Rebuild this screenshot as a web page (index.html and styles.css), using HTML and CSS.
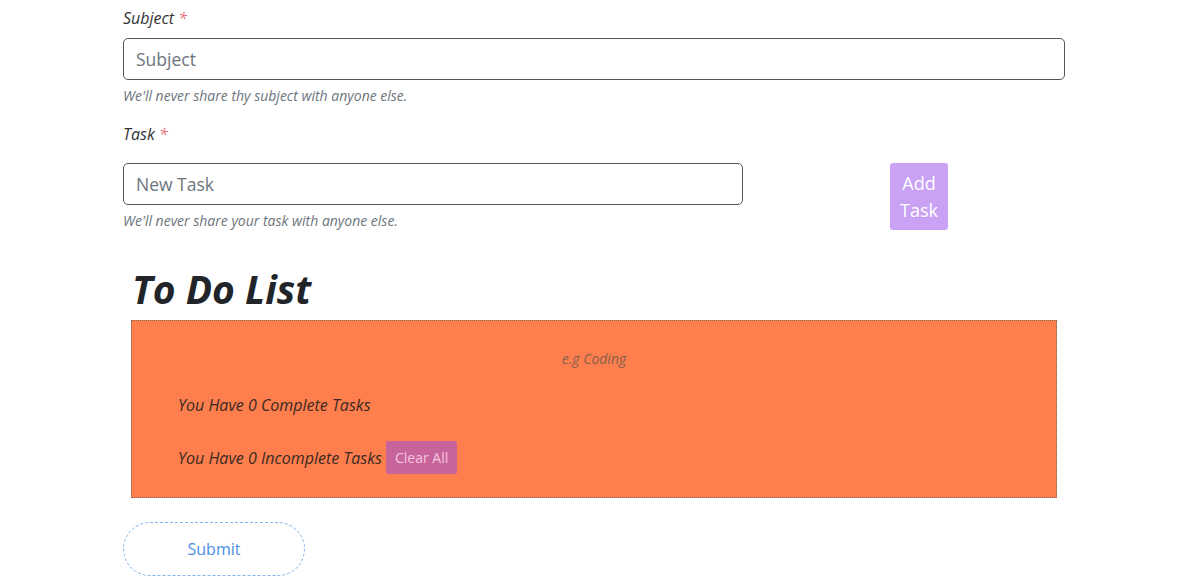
FILE: index.html
```html
<!DOCTYPE html>
<html lang="en">
<head>
<meta charset="utf-8">
<title>To Do List</title>
<link rel="stylesheet" href="styles.css">
</head>
<body>
<main class="page">
  <form class="form">
    <div class="field">
      <label class="label" for="subject">Subject <span class="req">*</span></label>
      <input class="input" id="subject" type="text" placeholder="Subject">
      <small class="help">We'll never share thy subject with anyone else.</small>
    </div>

    <div class="field">
      <label class="label" for="task">Task <span class="req">*</span></label>
      <div class="task-row">
        <div class="task-col">
          <input class="input" id="task" type="text" placeholder="New Task">
          <small class="help">We'll never share your task with anyone else.</small>
        </div>
        <button class="add-btn" type="button">Add Task</button>
      </div>
    </div>

    <section class="todo">
      <h1 class="todo-title">To Do List</h1>
      <div class="todo-box">
        <div class="example">e.g Coding</div>
        <p class="count">You Have 0 Complete Tasks</p>
        <p class="count">You Have 0 Incomplete Tasks <button class="clear-btn" type="button">Clear All</button></p>
      </div>
    </section>

    <button class="submit-btn" type="button">Submit</button>
  </form>
</main>
</body>
</html>
```

FILE: styles.css
```css
* { box-sizing: border-box; }

html, body {
  margin: 0;
  padding: 0;
  background: #ffffff;
}

body {
  font-family: "Open Sans", "Noto Sans", sans-serif;
  color: #212529;
}

.page {
  width: 942px;
  margin: 0 0 0 123px;
}

.form {
  display: flex;
  flex-direction: column;
  padding-top: 6px;
}

.field {
  display: flex;
  flex-direction: column;
}

.label {
  font-style: italic;
  font-size: 16px;
  line-height: 24px;
  color: #333333;
  margin-bottom: 8px;
}

.field + .field .label {
  margin-top: 16px;
  margin-bottom: 17px;
}

.req {
  color: #e86a76;
}

.input {
  display: block;
  width: 100%;
  height: 42px;
  padding: 0 12px;
  border: 1px solid #555555;
  border-radius: 5px;
  font-family: inherit;
  font-size: 17.5px;
  color: #212529;
  background: #ffffff;
}

.input::placeholder {
  color: #6c757d;
}

.help {
  display: block;
  margin-top: 5px;
  font-size: 14px;
  line-height: 21px;
  font-style: italic;
  color: #6c757d;
}

.task-row {
  display: flex;
  align-items: flex-start;
}

.task-col {
  width: 620px;
}

.add-btn {
  margin-left: 147px;
  width: 58px;
  height: 67px;
  padding: 0 4px;
  border: none;
  border-radius: 3px;
  background: #c9a2f4;
  color: #ffffff;
  font-family: inherit;
  font-size: 18px;
  line-height: 27px;
}

.todo {
  margin: 34px 8px 0;
}

.todo-title {
  margin: 0 0 8px 0;
  padding-left: 1px;
  font-size: 39px;
  line-height: 47px;
  font-style: italic;
  font-weight: 700;
  color: #212529;
}

.todo-box {
  height: 178px;
  background: #ff7e4e;
  border: 1px dotted #7a6658;
  padding: 28px 0 0 46px;
}

.example {
  margin-left: -46px;
  text-align: center;
  font-size: 14px;
  line-height: 20px;
  font-style: italic;
  color: #86604c;
}

.count {
  margin: 24px 0 0;
  font-size: 16px;
  line-height: 24px;
  font-style: italic;
  color: #3a2a22;
  display: flex;
  align-items: center;
}

.count + .count {
  margin-top: 24px;
}

.clear-btn {
  margin-left: 4px;
  height: 33px;
  padding: 0 9px;
  border: none;
  border-radius: 2px;
  background: #c8649c;
  color: #f6c7dd;
  font-family: inherit;
  font-size: 14px;
  font-style: normal;
}

.submit-btn {
  align-self: flex-start;
  margin-top: 24px;
  width: 182px;
  height: 54px;
  border: 1px dashed #80b3ee;
  border-radius: 27px;
  background: #ffffff;
  color: #4a8fe2;
  font-family: inherit;
  font-size: 16px;
}
```
